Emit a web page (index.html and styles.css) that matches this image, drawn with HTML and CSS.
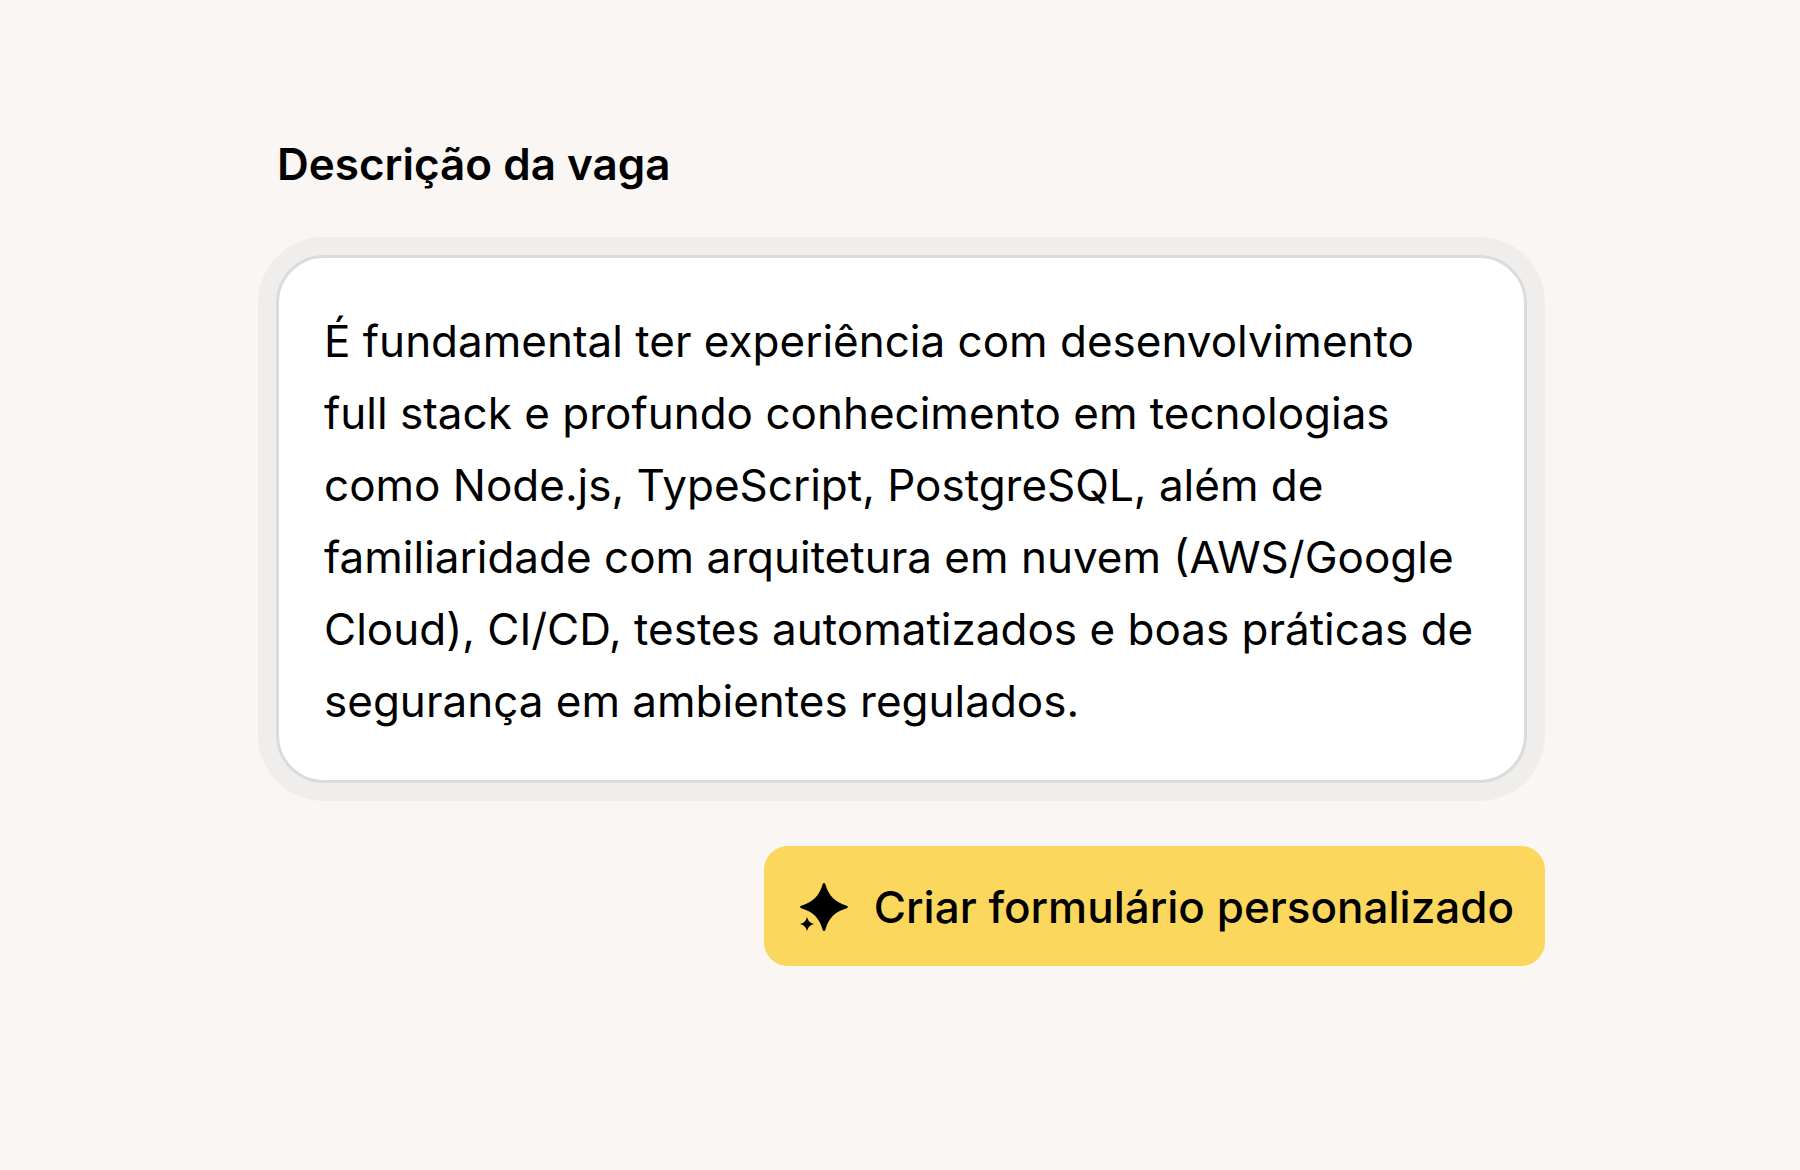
FILE: index.html
```
<!DOCTYPE html>
<html lang="pt-BR">
<head>
    <meta charset="UTF-8">
    <meta name="viewport" content="width=device-width, initial-scale=1.0">
    <title>Descrição da vaga</title>
    <link rel="stylesheet" href="styles.css">
</head>

<body>
    <form class="job-form">
        <label class="job-label" for="descricao">Descrição da vaga</label>
        <textarea class="job-text" id="descricao" rows="6" spellcheck="false">É fundamental ter experiência com desenvolvimento
full stack e profundo conhecimento em tecnologias
como Node.js, TypeScript, PostgreSQL, além de
familiaridade com arquitetura em nuvem (AWS/Google
Cloud), CI/CD, testes automatizados e boas práticas de
segurança em ambientes regulados.</textarea>
        <button class="job-button" type="button">
            <svg class="job-icon" viewBox="0 0 48 48" aria-hidden="true">
                <path d="M24 0C25 0 25.300 1 25.600 2C29 13 35 19 46 22.400C48.600 23.200 48.600 24.800 46 25.600C35 29 29 35 25.600 46C25.300 47 25 48 24 48C23 48 22.700 47 22.400 46C19 35 13 29 2 25.600C-.6 24.800-.6 23.200 2 22.400C13 19 19 13 22.400 2C22.700 1 23 0 24 0Z"/>
                <path d="M7 34C8.500 38.500 9.500 39.500 14 41C9.500 42.500 8.500 43.500 7 48C5.500 43.500 4.500 42.500 0 41C4.500 39.500 5.500 38.500 7 34Z"/>
            </svg>
            Criar formulário personalizado
        </button>
    </form>
</body>
</html>
```
FILE: styles.css
```
* {
    box-sizing: border-box;
}
body {
    margin: 0;
    padding: 128px 40px 128px 43px;
    background-color: #faf6f3;
    color: #000;
    font-family: Inter, "Liberation Sans", sans-serif;
}
.job-form {
    display: flex;
    flex-direction: column;
    max-width: 1287px;
    margin: 0 auto;
}
.job-label {
    margin: 0 19px 55px;
    font-size: 44px;
    font-weight: 600;
    line-height: 72px;
}
.job-text {
    display: block;
    height: 528px;
    margin: 0 18px;
    padding: 47px 24px 43px 45px;
    border: 3px solid #dcdbd9;
    border-radius: 48px;
    outline: none;
    box-shadow: 0 0 0 18px #efeeec; /* focus ring */
    background: #fff;
    color: inherit;
    font-family: inherit;
    font-size: 44px;
    line-height: 72px;
    resize: none;
    overflow: hidden;
}
.job-button {
    display: flex;
    align-items: center;
    align-self: flex-end;
    gap: 26px;
    height: 120px;
    margin-top: 63px;
    padding: 2px 31px 0 36px;
    border: none;
    border-radius: 24px;
    background-color: #fbd75e;
    color: inherit;
    font-family: inherit;
    font-size: 44px;
    font-weight: 450;
    line-height: 72px;
    cursor: pointer;
}
.job-icon {
    width: 48px;
    height: 48px;
}
```
